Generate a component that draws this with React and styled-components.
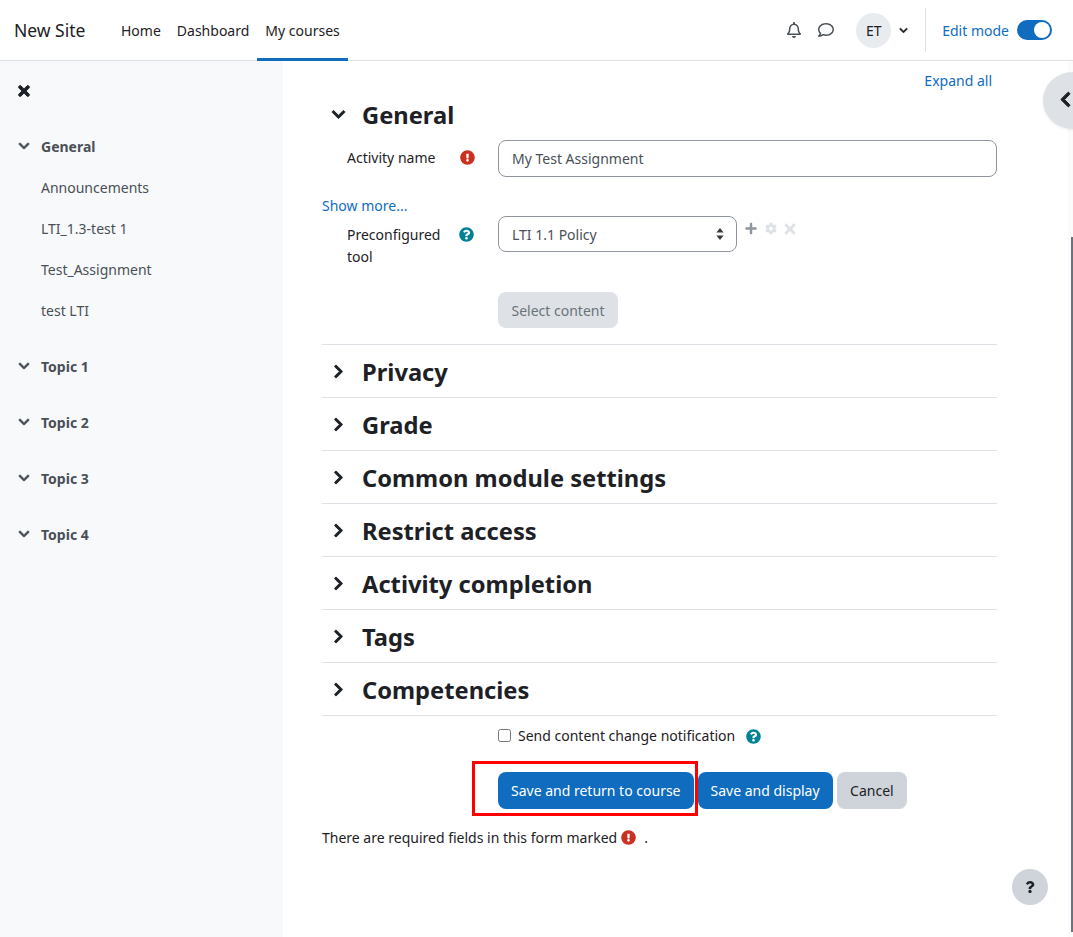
import React from "react";
import styled, { createGlobalStyle } from "styled-components";
import { FaChevronDown, FaChevronRight, FaChevronLeft, FaTimes, FaPlus, FaCog, FaExclamationCircle, FaQuestionCircle, FaQuestion, FaRegBell, FaRegComment } from "react-icons/fa";

const GlobalStyle = createGlobalStyle`
    html, body {
        margin: 0;
        padding: 0;
        height: 100%;
        overflow: hidden;
        background: #fff;
        font-family: "Noto Sans", "Open Sans", sans-serif;
        font-size: 14px;
        color: #1d2125;
    }
    * {
        box-sizing: border-box;
    }
`;

const Page = styled.div`
    width: 1073px;
    height: 937px;
    display: flex;
    flex-direction: column;
    position: relative;
    overflow: hidden;
`;

const Navbar = styled.header`
    height: 61px;
    flex: none;
    display: flex;
    align-items: stretch;
    border-bottom: 1px solid #dee2e6;
    padding: 0 21px 0 14px;
`;

const Brand = styled.div`
    font-size: 17.5px;
    display: flex;
    align-items: center;
    width: 99px;
`;

const NavItem = styled.div`
    display: flex;
    align-items: center;
    padding: 0 8px;
    border-bottom: 3px solid ${props => (props.$active ? "#0f6cbf" : "transparent")};
    margin-bottom: -1px;
    padding-top: 2px;
`;

const NavRight = styled.div`
    margin-left: auto;
    display: flex;
    align-items: center;
`;

const NavIcon = styled.span`
    display: flex;
    width: 16px;
    margin-right: 16px;
    color: #495057;
    font-size: 16px;
`;

const Avatar = styled.div`
    width: 35px;
    height: 35px;
    border-radius: 50%;
    background: #e9ecef;
    display: flex;
    align-items: center;
    justify-content: center;
    margin-left: 6px;
`;

const Caret = styled.span`
    display: flex;
    margin: 0 17px 0 8px;
    font-size: 9px;
    svg {
        stroke-width: 30px;
    }
`;

const EditMode = styled.div`
    height: 44px;
    border-left: 1px solid #dee2e6;
    padding-left: 16px;
    display: flex;
    align-items: center;
    color: #0f6cbf;
`;

const Toggle = styled.div`
    width: 35px;
    height: 20px;
    margin-left: 8px;
    border-radius: 10px;
    background: #0f6cbf;
    display: flex;
    justify-content: flex-end;
    padding: 2px;
`;

const Knob = styled.div`
    width: 16px;
    height: 16px;
    border-radius: 50%;
    background: #fff;
`;

const Body = styled.div`
    flex: 1;
    display: flex;
    min-height: 0;
`;

const Sidebar = styled.aside`
    width: 283px;
    flex: none;
    background: #f8f9fa;
    padding: 20px 0 0 18px;
`;

const CloseButton = styled.div`
    display: flex;
    font-size: 16px;
    height: 20px;
    align-items: center;
    margin: 0 0 35px -2px;
    svg {
        stroke-width: 30px;
    }
`;

const SectionTitle = styled.div`
    display: flex;
    align-items: center;
    height: 20px;
    font-weight: 700;
    color: #495057;
    gap: 11px;
    margin-bottom: ${props => (props.$open ? "11px" : "36px")};
    svg {
        font-size: 12px;
        stroke-width: 30px;
    }
`;

const SectionLink = styled.div`
    height: 41px;
    padding-left: 23px;
    display: flex;
    align-items: center;
    color: #495057;
`;

const SectionList = styled.div`
    margin-bottom: 25px;
`;

const Main = styled.main`
    flex: 1;
    padding: 0 76px 0 39px;
    position: relative;
`;

const ExpandRow = styled.div`
    height: 39px;
    display: flex;
    justify-content: flex-end;
    align-items: center;
    padding-right: 5px;
    color: #0f6cbf;
`;

const FieldsetHead = styled.div`
    display: flex;
    align-items: center;
    height: ${props => (props.$first ? "29px" : "53px")};
    border-top: ${props => (props.$first ? "none" : "1px solid #dee2e6")};
    padding: ${props => (props.$first ? "0" : "2px")} 0 0 9px;
    gap: 16px;
    font-size: 23.7px;
    font-weight: 700;
    svg {
        font-size: 15px;
        flex: none;
        stroke-width: 30px;
        margin-top: ${props => (props.$first ? "0" : "-2px")};
    }
`;

const FormRow = styled.div`
    display: grid;
    grid-template-columns: 176px 1fr;
    align-items: start;
    margin-top: ${props => props.$top || 0}px;
`;

const Label = styled.div`
    display: flex;
    padding: ${props => props.$pad || 7}px 0 0 25px;
    line-height: 22px;
    width: 176px;
`;

const LabelText = styled.div`
    width: 112px;
`;

const Marker = styled.span`
    display: inline-flex;
    font-size: 15px;
    margin: ${props => props.$margin || "3px 0 0"};
    color: ${props => props.$color};
`;

const TextInput = styled.div`
    height: 37px;
    border: 1px solid #8f959e;
    border-radius: 8px;
    padding-left: 13px;
    display: flex;
    align-items: center;
    color: #495057;
`;

const ShowMore = styled.div`
    color: #0f6cbf;
    margin: 19px 0 0;
    line-height: 20px;
`;

const SelectRow = styled.div`
    display: flex;
    align-items: flex-start;
`;

const SelectBox = styled.div`
    width: 239px;
    height: 36px;
    border: 1px solid #8f959e;
    border-radius: 8px;
    padding: 0 12px 0 13px;
    display: flex;
    align-items: center;
    justify-content: space-between;
    color: #495057;
`;

const ToolIcon = styled.span`
    display: inline-flex;
    justify-content: center;
    width: 12px;
    height: 13px;
    align-items: center;
    font-size: ${props => props.$size || 13}px;
    margin: 6px 7.5px 0 0;
    color: ${props => props.$color};
    &:first-of-type {
        margin-left: 8px;
    }
`;

const DisabledButton = styled.div`
    width: 120px;
    height: 36px;
    margin: 24px 0 16px;
    border-radius: 8px;
    background: #dee2e6;
    color: #6a737b;
    display: flex;
    align-items: center;
    justify-content: center;
`;

const Divider = styled.div`
    border-top: 1px solid #dee2e6;
`;

const CheckRow = styled.div`
    display: flex;
    align-items: center;
    height: 40px;
    padding: 0 0 2px 176px;
`;

const CheckBox = styled.span`
    width: 13px;
    height: 13px;
    border: 1px solid #767676;
    border-radius: 2.5px;
    margin-right: 7px;
    background: #fff;
`;

const Buttons = styled.div`
    display: flex;
    padding-left: 176px;
    margin-top: 16px;
    position: relative;
`;

const Button = styled.div`
    height: 37px;
    border-radius: 8px;
    padding: 0 ${props => props.$pad || 13}px;
    margin-right: ${props => props.$gap || 0}px;
    display: flex;
    align-items: center;
    background: ${props => (props.$primary ? "#0f6cbf" : "#ced4da")};
    color: ${props => (props.$primary ? "#fff" : "#1d2125")};
`;

const Highlight = styled.div`
    position: absolute;
    left: 150px;
    top: -11px;
    width: 226px;
    height: 55px;
    border: 3px solid #f00;
`;

const Required = styled.div`
    display: flex;
    align-items: center;
    margin-top: 18px;
    height: 20px;
`;

const ScrollTrack = styled.div`
    position: absolute;
    left: 1068px;
    top: 61px;
    width: 5px;
    height: 876px;
    background: #fbfbfc;
`;

const ScrollThumb = styled.div`
    position: absolute;
    left: 3px;
    top: 176px;
    width: 2px;
    height: 695px;
    background: #6a737b;
`;

const Drawer = styled.div`
    position: absolute;
    left: 1043px;
    top: 72px;
    width: 60px;
    height: 57px;
    border-radius: 50%;
    background: #dee2e6;
    box-shadow: 0 1px 3px rgba(0, 0, 0, 0.08);
    padding: 19px 0 0 14px;
    font-size: 17px;
    display: flex;
    align-items: flex-start;
    svg {
        stroke-width: 30px;
    }
`;

const Help = styled.div`
    position: absolute;
    left: 1012px;
    top: 869px;
    width: 36px;
    height: 36px;
    border-radius: 50%;
    background: #ced4da;
    display: flex;
    align-items: center;
    justify-content: center;
    font-size: 12px;
`;

const sections = ["Privacy", "Grade", "Common module settings", "Restrict access", "Activity completion", "Tags", "Competencies"];
const links = ["Announcements", "LTI_1.3-test 1", "Test_Assignment", "test LTI"];
const topics = ["Topic 1", "Topic 2", "Topic 3", "Topic 4"];

export default function App() {
    return (
        <Page>
            <GlobalStyle />
            <Navbar>
                <Brand>New Site</Brand>
                <NavItem>Home</NavItem>
                <NavItem>Dashboard</NavItem>
                <NavItem $active>My courses</NavItem>
                <NavRight>
                    <NavIcon><FaRegBell /></NavIcon>
                    <NavIcon><FaRegComment /></NavIcon>
                    <Avatar>ET</Avatar>
                    <Caret><FaChevronDown /></Caret>
                    <EditMode>
                        Edit mode
                        <Toggle><Knob /></Toggle>
                    </EditMode>
                </NavRight>
            </Navbar>
            <Body>
                <Sidebar>
                    <CloseButton><FaTimes /></CloseButton>
                    <SectionTitle $open><FaChevronDown />General</SectionTitle>
                    <SectionList>
                        {links.map(link => <SectionLink key={link}>{link}</SectionLink>)}
                    </SectionList>
                    {topics.map(topic => (
                        <SectionTitle key={topic}><FaChevronDown />{topic}</SectionTitle>
                    ))}
                </Sidebar>
                <Main>
                    <ExpandRow>Expand all</ExpandRow>
                    <FieldsetHead $first><FaChevronDown />General</FieldsetHead>
                    <FormRow $top={11}>
                        <Label>
                            <LabelText>Activity name</LabelText>
                            <Marker $color="#ca3120" $margin="3px 0 0 1px"><FaExclamationCircle /></Marker>
                        </Label>
                        <TextInput>My Test Assignment</TextInput>
                    </FormRow>
                    <ShowMore>Show more...</ShowMore>
                    <FormRow>
                        <Label $pad={8}>
                            <LabelText>Preconfigured tool</LabelText>
                            <Marker $color="#008196"><FaQuestionCircle /></Marker>
                        </Label>
                        <SelectRow>
                            <SelectBox>
                                LTI 1.1 Policy
                                <svg width="8" height="12" viewBox="0 0 8 12"><path d="M4 0l3.6 4.4H.4zM4 12L.4 7.6h7.2z" fill="#343a40" /></svg>
                            </SelectBox>
                            <ToolIcon $color="#8f959e"><FaPlus /></ToolIcon>
                            <ToolIcon $color="#dee2e6"><FaCog /></ToolIcon>
                            <ToolIcon $color="#dee2e6" $size={16}><FaTimes /></ToolIcon>
                        </SelectRow>
                    </FormRow>
                    <FormRow>
                        <div />
                        <DisabledButton>Select content</DisabledButton>
                    </FormRow>
                    {sections.map(name => (
                        <FieldsetHead key={name}><FaChevronRight />{name}</FieldsetHead>
                    ))}
                    <Divider />
                    <CheckRow>
                        <CheckBox />
                        Send content change notification
                        <Marker $color="#008196" $margin="2px 0 0 11px"><FaQuestionCircle /></Marker>
                    </CheckRow>
                    <Buttons>
                        <Button $primary $gap={4}>Save and return to course</Button>
                        <Button $primary $gap={4}>Save and display</Button>
                        <Button $pad={13.5}>Cancel</Button>
                        <Highlight />
                    </Buttons>
                    <Required>
                        There are required fields in this form marked
                        <Marker $color="#ca3120" $margin="0 8px 0 4px"><FaExclamationCircle /></Marker>
                        .
                    </Required>
                </Main>
            </Body>
            <ScrollTrack><ScrollThumb /></ScrollTrack>
            <Drawer><FaChevronLeft /></Drawer>
            <Help><FaQuestion /></Help>
        </Page>
    );
}
